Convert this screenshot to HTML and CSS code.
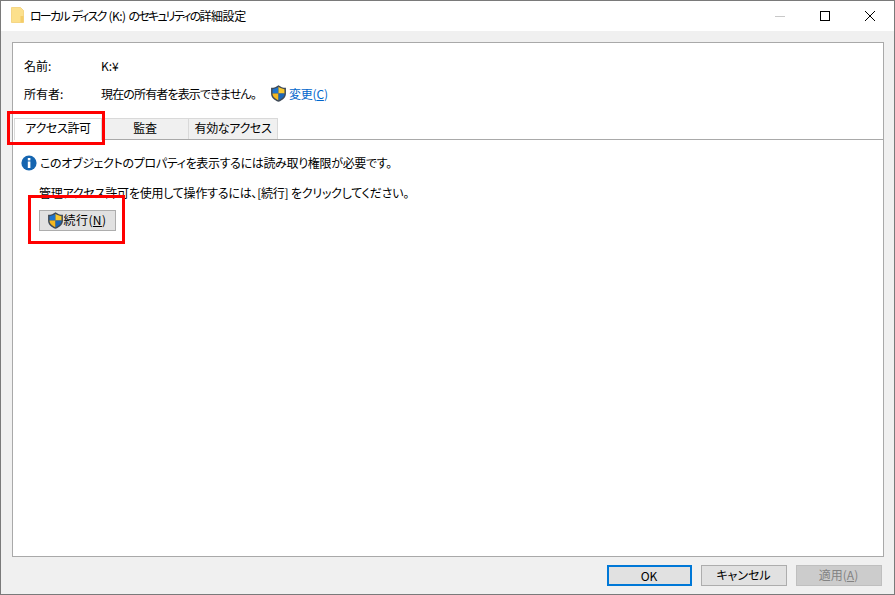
FILE: index.html
```html
<!DOCTYPE html>
<html lang="ja">
<head>
<meta charset="utf-8">
<title>詳細設定</title>
<link rel="stylesheet" href="styles.css">
</head>
<body>
<svg class="defs" width="0" height="0" aria-hidden="true">
  <symbol id="shield" viewBox="0 0 16 16">
    <path d="M8 .2C6 1.800 4 2.500 1 2.700v5.500c0 3.300 2.800 6 7 7.600 4.200-1.600 7-4.300 7-7.600V2.700C12 2.500 10 1.800 8 .2z" fill="#3f4a57"/>
    <path d="M8 1.700C6.300 3 4.600 3.600 2.400 3.900V8H8z" fill="#1f74cc"/>
    <path d="M8 1.700c1.700 1.300 3.400 1.900 5.600 2.200V8H8z" fill="#f9c92f"/>
    <path d="M2.400 8H8v6.300C4.800 13 2.400 11 2.400 8z" fill="#f5b81f"/>
    <path d="M8 8h5.600c0 3-2.400 5-5.600 6.300z" fill="#1a66b8"/>
  </symbol>
</svg>
<div class="window">
  <header class="titlebar">
    <svg class="folder" width="16" height="16" viewBox="0 0 16 16" aria-hidden="true">
      <path d="M1.500.5h9l3 3v12h-12z" fill="#fce08c" stroke="#f0cb6a" stroke-width=".7"/>
      <path d="M10.500 15.500V9h3v6.500z" fill="#f4cd68"/>
    </svg>
    <span class="title">ローカル ディスク <span class="title-latin">(K:)</span> のセキュリティの<span class="title-end">詳細設定</span></span>
    <div class="controls">
      <span class="ctl"><svg width="12" height="12" viewBox="0 0 12 12"><path d="M1 6.500h10" stroke="#c8c8c8"/></svg></span>
      <span class="ctl"><svg width="12" height="12" viewBox="0 0 12 12"><rect x="1.500" y="1.500" width="9" height="9" fill="none" stroke="#000"/></svg></span>
      <span class="ctl"><svg width="12" height="12" viewBox="0 0 12 12"><path d="M1 1l10 10M11 1L1 11" stroke="#000"/></svg></span>
    </div>
  </header>
  <main class="body">
    <section class="panel">
      <div class="info-row name-row"><span class="label">名前:</span><span>K:¥</span></div>
      <div class="info-row owner-row">
        <span class="label">所有者:</span>
        <span class="owner-text">現在の所有者を表示できません。</span>
        <svg class="shield owner-shield"><use href="#shield"/></svg>
        <a class="link">変更(<u>C</u>)</a>
      </div>
      <nav class="tabs">
        <span class="tab active">アクセス許可</span>
        <span class="tab audit">監査</span>
        <span class="tab effective">有効なアクセス</span>
      </nav>
      <div class="tab-body">
        <p class="notice">
          <svg width="16" height="16" viewBox="0 0 16 16" aria-hidden="true">
            <circle cx="8" cy="8" r="7.600" fill="#1565b0"/>
            <rect x="6.800" y="6.500" width="2.600" height="6.500" fill="#fff"/>
            <rect x="6.800" y="3" width="2.600" height="2.400" fill="#fff"/>
          </svg>
          <span class="notice-text">このオブジェクトのプロパティを表示するには読み取り権限が必要です。</span>
        </p>
        <p class="hint">管理アクセス許可を使用して操作するには、[続行] をクリックしてください。</p>
        <button class="continue"><svg class="shield"><use href="#shield"/></svg><span class="continue-text">続行(<u>N</u>)</span></button>
      </div>
    </section>
    <footer class="actions">
      <button class="btn primary">OK</button>
      <button class="btn">キャンセル</button>
      <button class="btn disabled">適用(<u>A</u>)</button>
    </footer>
  </main>
  <div class="mark mark-tab"></div>
  <div class="mark mark-btn"></div>
</div>
</body>
</html>
```

FILE: styles.css
```css
* { box-sizing: border-box; }
html, body { margin: 0; padding: 0; }
body {
  width: 895px;
  height: 595px;
  overflow: hidden;
  font-family: "Noto Sans CJK JP", "Noto Sans", sans-serif;
  font-size: 12px;
  font-feature-settings: "palt";
  color: #000;
  background: #f0f0f0;
}
.defs { position: absolute; }
.shield { width: 17px; height: 17px; flex: none; }
.window {
  position: relative;
  width: 895px;
  height: 595px;
  display: flex;
  flex-direction: column;
  border: 1px solid #7a7a7a;
}
.titlebar {
  height: 30px;
  flex: none;
  display: flex;
  align-items: center;
  background: #fff;
  padding-left: 9px;
}
.folder { margin-bottom: 2px; }
.title { margin: 0 0 2px 4px; letter-spacing: -1.8px; word-spacing: 2px; }
.title-latin { letter-spacing: -0.5px; }
.title-end { letter-spacing: -0.4px; }
.controls { margin-left: auto; display: flex; margin-right: 2px; }
.ctl {
  width: 45px;
  height: 30px;
  display: flex;
  align-items: center;
  justify-content: center;
}
.body {
  flex: 1;
  display: flex;
  flex-direction: column;
  padding: 11px 10px 0 11px;
}
.panel {
  height: 515px;
  flex: none;
  background: #fff;
  border: 1px solid #a9a9a9;
  padding: 11px 0 0 11px;
  display: flex;
  flex-direction: column;
}
.info-row { display: flex; align-items: center; height: 22px; }
.owner-row { margin-top: 6px; }
.label { width: 77px; flex: none; }
.owner-text { letter-spacing: -0.85px; }
.owner-shield { margin-left: 14px; }
.link { margin-left: 2px; color: #0066cc; letter-spacing: -0.2px; }
.tabs {
  display: flex;
  margin: 14px 0 0 -10px;
  height: 22px;
  border-bottom: 1px solid #a9a9a9;
}
.tab {
  height: 21px;
  display: flex;
  align-items: center;
  justify-content: center;
  padding-bottom: 4px;
  background: #f0f0f0;
  border: 1px solid #d9d9d9;
  border-left: 0;
  border-bottom: 0;
  letter-spacing: -0.35px;
}
.tab.active {
  width: 88px;
  height: 22px;
  background: #fff;
  border-left: 1px solid #d9d9d9;
}
.tab.audit { width: 87px; }
.tab.effective { width: 89px; }
.tab-body { padding-top: 13px; margin-left: -3px; display: flex; flex-direction: column; }
.notice { margin: 0; display: flex; align-items: center; gap: 3px; height: 18px; letter-spacing: -0.33px; }
.notice svg { margin-top: 2px; }
.hint { margin: 13px 0 0 18px; height: 18px; line-height: 18px; letter-spacing: -0.22px; }
.continue {
  margin: 8px 0 0 18px;
  width: 77px;
  height: 21px;
  display: flex;
  align-items: center;
  justify-content: center;
  gap: 0;
  padding: 0 2px 0 0;
  background: #e1e1e1;
  border: 1px solid #adadad;
  font: inherit;
  font-feature-settings: "palt";
  color: #000;
  letter-spacing: 0.4px;
}
.continue-text { margin-bottom: 3px; }
.actions {
  display: flex;
  justify-content: flex-end;
  gap: 9px;
  margin-top: 8px;
  padding-right: 2px;
}
.btn {
  width: 86px;
  height: 21px;
  padding: 0 1px 2px 0;
  background: #e1e1e1;
  border: 1px solid #adadad;
  font: inherit;
  font-feature-settings: "palt";
  color: #000;
}
.btn.primary { width: 85px; border: 2px solid #0078d7; }
.btn.disabled { background: #cccccc; border-color: #bfbfbf; color: #838383; }
.mark { position: absolute; border: 3px solid #f00; pointer-events: none; }
.mark-tab { left: 6px; top: 110px; width: 98px; height: 34px; }
.mark-btn { left: 27px; top: 194px; width: 97px; height: 49px; }
```
